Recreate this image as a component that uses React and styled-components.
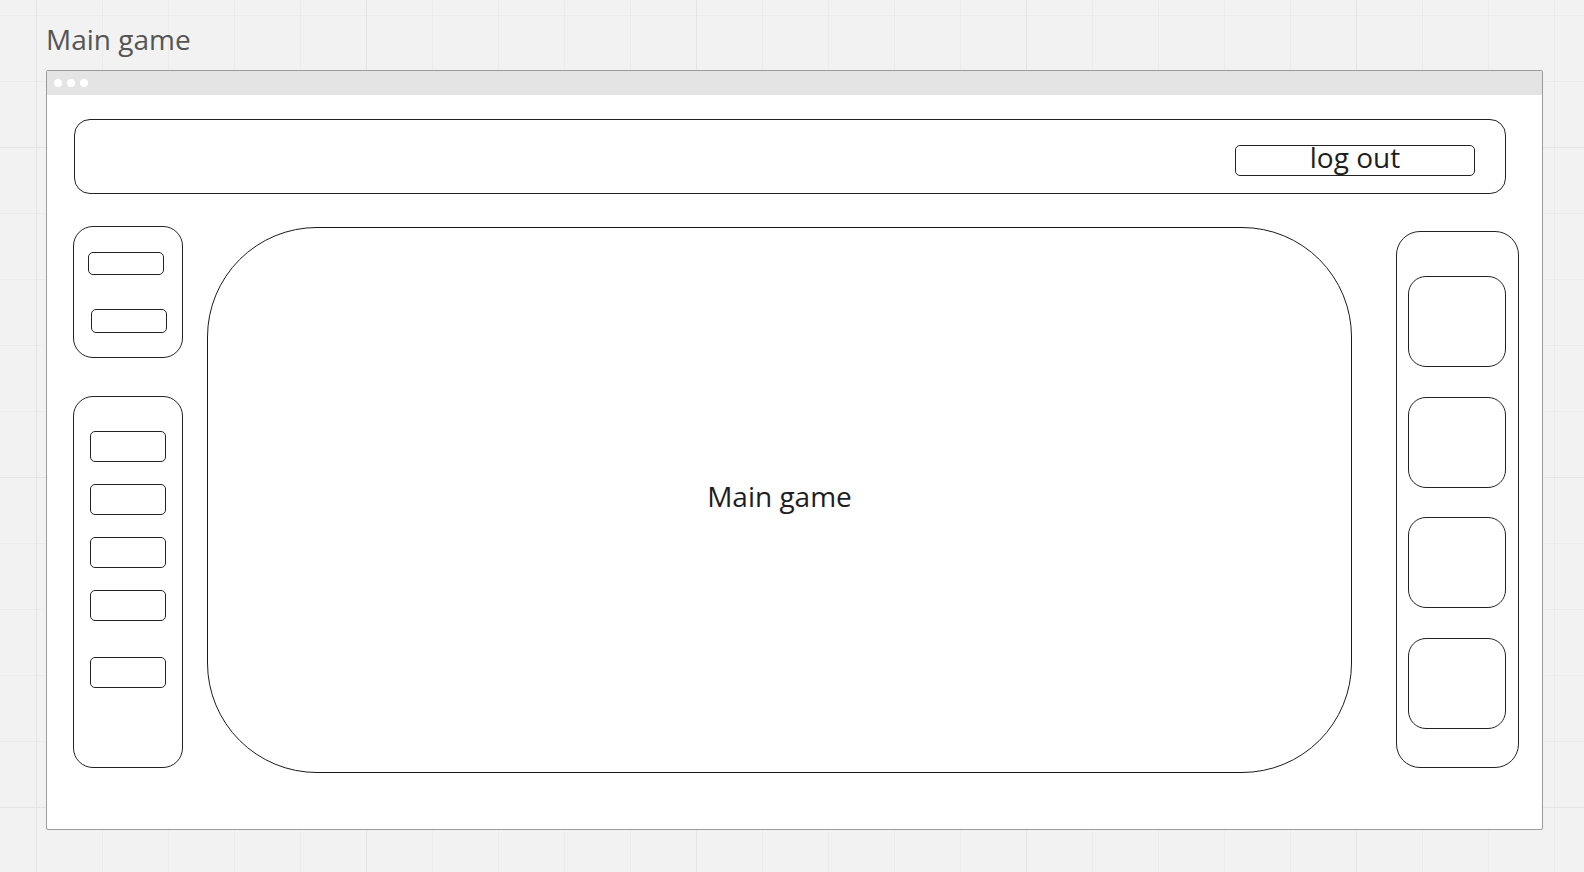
import React from 'react';
import styled, { createGlobalStyle } from 'styled-components';

const GlobalStyle = createGlobalStyle`
  html, body {
    margin: 0;
    padding: 0;
  }
  body {
    font-family: "Open Sans", "Liberation Sans", sans-serif;
  }
`;

const toolSlots = [
  { top: 25, left: 14, height: 23 },
  { top: 34, left: 17, height: 24 },
];

const menuSlots = [
  { top: 34, height: 31 },
  { top: 22, height: 31 },
  { top: 22, height: 31 },
  { top: 22, height: 31 },
  { top: 36, height: 31 },
];

const cards = [1, 2, 3, 4];

const App = () => {
  return (
    <>
      <GlobalStyle />
      <Canvas>
        <FrameTitle>Main game</FrameTitle>
        <Frame>
          <TitleBar>
            <Dot />
            <Dot />
            <Dot />
          </TitleBar>
          <FrameBody>
            <TopBar>
              <LogOut>log out</LogOut>
            </TopBar>
            <ContentRow>
              <LeftColumn>
                <SidePanel $height={132}>
                  {toolSlots.map((s, i) => (
                    <Slot key={i} $top={s.top} $left={s.left} $height={s.height} />
                  ))}
                </SidePanel>
                <SidePanel $height={372}>
                  {menuSlots.map((s, i) => (
                    <Slot key={i} $top={s.top} $left={16} $height={s.height} />
                  ))}
                </SidePanel>
              </LeftColumn>
              <GameArea>
                <GameLabel>Main game</GameLabel>
              </GameArea>
              <CardRail>
                {cards.map((c) => (
                  <Card key={c} />
                ))}
              </CardRail>
            </ContentRow>
          </FrameBody>
        </Frame>
      </Canvas>
    </>
  );
};

const Canvas = styled.div`
  width: 1584px;
  height: 872px;
  box-sizing: border-box;
  padding: 19px 0 0 46px;
  overflow: hidden;
  background-color: #f2f2f2;
  background-image:
    linear-gradient(to right, #e4e4e4 1px, transparent 1px),
    linear-gradient(to bottom, #e4e4e4 1px, transparent 1px),
    linear-gradient(to right, #ebebeb 1px, transparent 1px),
    linear-gradient(to bottom, #ebebeb 1px, transparent 1px);
  background-size: 330px 330px, 330px 330px, 66px 66px, 66px 66px;
  background-position: 36px 147px, 36px 147px, 36px 15px, 36px 15px;
`;

const FrameTitle = styled.div`
  font-size: 28px;
  line-height: 40px;
  color: #555;
  height: 40px;
`;

const Frame = styled.div`
  margin-top: 11px;
  width: 1497px;
  height: 760px;
  box-sizing: border-box;
  border: 1px solid #9c9c9c;
  border-radius: 2px;
  background: #fff;
  overflow: hidden;
`;

const TitleBar = styled.div`
  height: 24px;
  background: #e4e4e4;
  display: flex;
  align-items: center;
  gap: 5px;
  padding-left: 7px;
`;

const Dot = styled.span`
  width: 8px;
  height: 8px;
  border-radius: 50%;
  background: #fff;
`;

const FrameBody = styled.div`
  padding: 24px 0 0 26px;
`;

const TopBar = styled.div`
  margin-left: 1px;
  width: 1432px;
  height: 75px;
  box-sizing: border-box;
  border: 1px solid #222;
  border-radius: 16px;
  display: flex;
  justify-content: flex-end;
  align-items: flex-start;
  padding: 25px 30px 0 0;
`;

const LogOut = styled.div`
  width: 240px;
  height: 31px;
  box-sizing: border-box;
  border: 1px solid #222;
  border-radius: 5px;
  font-size: 28px;
  line-height: 22px;
  color: #1e1e1e;
  text-align: center;
  cursor: pointer;
`;

const ContentRow = styled.div`
  display: flex;
  align-items: flex-start;
  margin-top: 32px;
`;

const LeftColumn = styled.div`
  width: 110px;
  display: flex;
  flex-direction: column;
  gap: 38px;
`;

const SidePanel = styled.div`
  height: ${(p) => p.$height}px;
  box-sizing: border-box;
  border: 1px solid #222;
  border-radius: 20px;
  display: flex;
  flex-direction: column;
`;

const Slot = styled.div`
  flex: none;
  width: 76px;
  height: ${(p) => p.$height}px;
  margin-top: ${(p) => p.$top}px;
  margin-left: ${(p) => p.$left}px;
  box-sizing: border-box;
  border: 1px solid #222;
  border-radius: 5px;
`;

const GameArea = styled.div`
  margin-left: 24px;
  margin-top: 1px;
  width: 1145px;
  height: 546px;
  box-sizing: border-box;
  border: 1px solid #1a1a1a;
  border-radius: 110px;
  display: flex;
  align-items: center;
  justify-content: center;
  padding-bottom: 8px;
`;

const GameLabel = styled.div`
  font-size: 28px;
  color: #1e1e1e;
`;

const CardRail = styled.div`
  margin-left: 44px;
  margin-top: 5px;
  width: 123px;
  height: 537px;
  box-sizing: border-box;
  border: 1px solid #222;
  border-radius: 24px;
  padding: 44px 0 0 11px;
  display: flex;
  flex-direction: column;
  gap: 29.5px;
`;

const Card = styled.div`
  width: 98px;
  height: 91px;
  box-sizing: border-box;
  border: 1px solid #222;
  border-radius: 18px;
`;

export default App;
